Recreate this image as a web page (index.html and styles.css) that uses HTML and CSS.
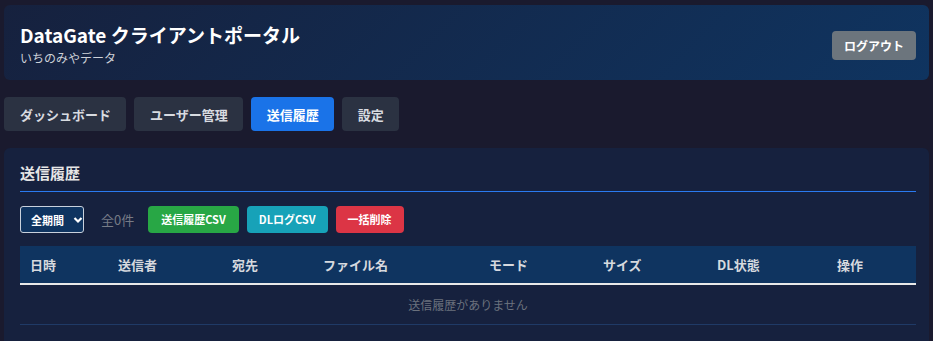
FILE: index.html
```html
<!DOCTYPE html>
<html lang="ja">
<head>
<meta charset="utf-8">
<title>DataGate クライアントポータル</title>
<link rel="stylesheet" href="styles.css">
</head>
<body>
<header class="header">
  <div class="brand">
    <h1 class="title">DataGate クライアントポータル</h1>
    <div class="subtitle">いちのみやデータ</div>
  </div>
  <button class="btn btn-gray">ログアウト</button>
</header>
<nav class="tabs">
  <button class="tab">ダッシュボード</button>
  <button class="tab">ユーザー管理</button>
  <button class="tab active">送信履歴</button>
  <button class="tab">設定</button>
</nav>
<section class="panel">
  <h2 class="panel-title">送信履歴</h2>
  <div class="toolbar">
    <div class="select">全期間<svg class="chev" width="10" height="8" viewBox="0 0 10 8"><path d="M1.5 2 L5 5.5 L8.5 2" fill="none" stroke="#fff" stroke-width="2.2"/></svg></div>
    <span class="count">全0件</span>
    <button class="btn btn-green">送信履歴CSV</button>
    <button class="btn btn-teal">DLログCSV</button>
    <button class="btn btn-red">一括削除</button>
  </div>
  <table class="table">
    <colgroup>
      <col class="c1"><col class="c2"><col class="c3"><col class="c4"><col class="c5"><col class="c6"><col class="c7"><col class="c8">
    </colgroup>
    <thead>
      <tr><th>日時</th><th>送信者</th><th>宛先</th><th>ファイル名</th><th>モード</th><th>サイズ</th><th>DL状態</th><th>操作</th></tr>
    </thead>
    <tbody>
      <tr><td class="empty" colspan="8">送信履歴がありません</td></tr>
    </tbody>
  </table>
</section>
</body>
</html>
```
FILE: styles.css
```css
* { box-sizing: border-box; }
html, body { margin: 0; }
body {
  background: #1a1a2e;
  padding: 5px 4px 0;
  font-family: "Noto Sans CJK JP", "Noto Sans", sans-serif;
  color: #e0e0e0;
  height: 341px;
  overflow: hidden;
}
button { font-family: inherit; border: none; cursor: pointer; }
.header {
  height: 75px;
  border-radius: 6px;
  background: linear-gradient(135deg, #16213e 0%, #0f3460 100%);
  display: flex;
  align-items: center;
  justify-content: space-between;
  padding: 0 13px 0 16px;
}
.brand { margin-top: 1px; }
.title {
  margin: 0;
  font-size: 19px;
  font-weight: 700;
  color: #fff;
  line-height: 26px;
}
.subtitle {
  font-size: 12px;
  color: #cdd1d8;
  line-height: 14px;
  margin-top: 3px;
}
.header .btn { margin-top: 6px; }
.btn {
  height: 29px;
  padding: 0 12px;
  border-radius: 4px;
  font-size: 12px;
  font-weight: 700;
  color: #fff;
  line-height: 29px;
}
.btn-gray { background: #6c757d; }
.btn-green { background: #28a745; }
.btn-teal { background: #17a2b8; }
.btn-red { background: #dc3545; }
.tabs {
  display: flex;
  gap: 8px;
  margin-top: 17px;
}
.tab {
  height: 34px;
  padding: 0 15px 0 16px;
  border-radius: 4px;
  background: #2b3242;
  color: #d8dbe0;
  font-size: 13px;
  font-weight: 700;
}
.tab.active { background: #1a73e8; color: #fff; }
.panel {
  margin-top: 17px;
  background: #16213e;
  border-radius: 6px 6px 0 0;
  padding: 14px 13px 20px 16px;
  height: 200px;
}
.panel-title {
  margin: 0;
  font-size: 15px;
  font-weight: 700;
  color: #e6e6e6;
  line-height: 22px;
  padding-bottom: 7px;
  border-bottom: 1px solid #2a7af0;
}
.toolbar {
  display: flex;
  align-items: center;
  gap: 8px;
  margin-top: 14px;
}
.select {
  width: 64px;
  height: 27px;
  border: 1px solid #c9d1dc;
  border-radius: 3px;
  background: #0f3460;
  color: #fff;
  font-size: 11px;
  font-weight: 700;
  display: flex;
  align-items: center;
  padding-left: 10px;
  gap: 9px;
}
.chev { margin-top: 1px; }
.count {
  font-size: 13px;
  color: #777c86;
  margin: 0 6px 0 9px;
}
.toolbar .btn { height: 27px; line-height: 27px; padding: 0 13px; font-size: 11px; }
.toolbar .btn-teal, .toolbar .btn-red { padding: 0 12px; }
.table {
  margin-top: 13px;
  width: 896px;
  border-collapse: collapse;
  table-layout: fixed;
}
.c1 { width: 88px; } .c2 { width: 114px; } .c3 { width: 91px; } .c4 { width: 166px; }
.c5 { width: 114px; } .c6 { width: 114px; } .c7 { width: 120px; } .c8 { width: 89px; }
th {
  background: #0f3460;
  height: 38px;
  text-align: left;
  padding: 0 10px;
  font-size: 13px;
  font-weight: 700;
  color: #d6d9de;
  border-bottom: 2px solid #e8e8e8;
}
td {
  height: 40px;
  border-bottom: 1px solid #1f3a66;
}
.empty {
  text-align: center;
  font-size: 12px;
  color: #6b717d;
  padding-top: 2px;
}
```
